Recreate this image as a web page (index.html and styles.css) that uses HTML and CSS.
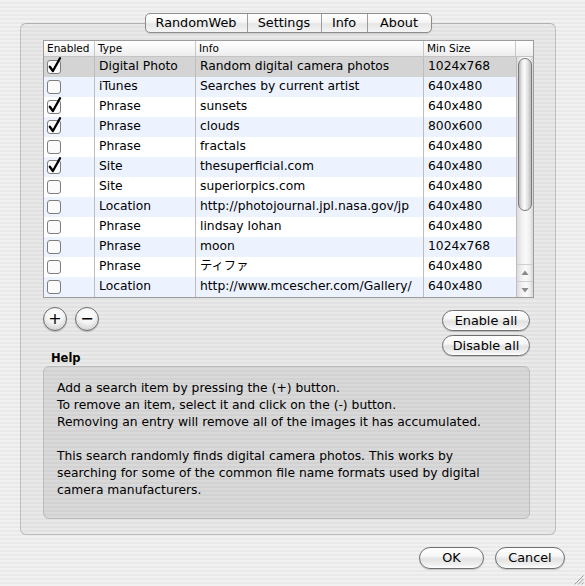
FILE: index.html
```html
<!DOCTYPE html>
<html>
<head>
<meta charset="utf-8">
<link rel="stylesheet" href="styles.css">
</head>
<body>
<div class="window">
  <div class="tabs-wrap">
    <div class="tabs">
      <div class="tab t1">RandomWeb</div>
      <div class="tab t2">Settings</div>
      <div class="tab t3">Info</div>
      <div class="tab t4">About</div>
    </div>
  </div>
  <div class="group">
    <div class="table">
      <div class="thead">
        <div class="th c1">Enabled</div>
        <div class="th c2">Type</div>
        <div class="th c3">Info</div>
        <div class="th c4">Min Size</div>
        <div class="th c5"></div>
      </div>
      <div class="tbody">
        <div class="rows">
          <div class="row sel"><div class="td c1"><svg class="cb" viewBox="0 0 17 17"><rect x="1.5" y="3.5" width="13" height="13" rx="2.5" class="box"/><path d="M3.8 9.8 L6.9 14 L14 1.2" class="chk"/></svg></div><div class="td c2">Digital Photo</div><div class="td c3">Random digital camera photos</div><div class="td c4">1024x768</div></div>
          <div class="row alt"><div class="td c1"><svg class="cb" viewBox="0 0 17 17"><rect x="1.5" y="3.5" width="13" height="13" rx="2.5" class="box"/></svg></div><div class="td c2">iTunes</div><div class="td c3">Searches by current artist</div><div class="td c4">640x480</div></div>
          <div class="row"><div class="td c1"><svg class="cb" viewBox="0 0 17 17"><rect x="1.5" y="3.5" width="13" height="13" rx="2.5" class="box"/><path d="M3.8 9.8 L6.9 14 L14 1.2" class="chk"/></svg></div><div class="td c2">Phrase</div><div class="td c3">sunsets</div><div class="td c4">640x480</div></div>
          <div class="row alt"><div class="td c1"><svg class="cb" viewBox="0 0 17 17"><rect x="1.5" y="3.5" width="13" height="13" rx="2.5" class="box"/><path d="M3.8 9.8 L6.9 14 L14 1.2" class="chk"/></svg></div><div class="td c2">Phrase</div><div class="td c3">clouds</div><div class="td c4">800x600</div></div>
          <div class="row"><div class="td c1"><svg class="cb" viewBox="0 0 17 17"><rect x="1.5" y="3.5" width="13" height="13" rx="2.5" class="box"/></svg></div><div class="td c2">Phrase</div><div class="td c3">fractals</div><div class="td c4">640x480</div></div>
          <div class="row alt"><div class="td c1"><svg class="cb" viewBox="0 0 17 17"><rect x="1.5" y="3.5" width="13" height="13" rx="2.5" class="box"/><path d="M3.8 9.8 L6.9 14 L14 1.2" class="chk"/></svg></div><div class="td c2">Site</div><div class="td c3">thesuperficial.com</div><div class="td c4">640x480</div></div>
          <div class="row"><div class="td c1"><svg class="cb" viewBox="0 0 17 17"><rect x="1.5" y="3.5" width="13" height="13" rx="2.5" class="box"/></svg></div><div class="td c2">Site</div><div class="td c3">superiorpics.com</div><div class="td c4">640x480</div></div>
          <div class="row alt"><div class="td c1"><svg class="cb" viewBox="0 0 17 17"><rect x="1.5" y="3.5" width="13" height="13" rx="2.5" class="box"/></svg></div><div class="td c2">Location</div><div class="td c3">http://photojournal.jpl.nasa.gov/jp</div><div class="td c4">640x480</div></div>
          <div class="row"><div class="td c1"><svg class="cb" viewBox="0 0 17 17"><rect x="1.5" y="3.5" width="13" height="13" rx="2.5" class="box"/></svg></div><div class="td c2">Phrase</div><div class="td c3">lindsay lohan</div><div class="td c4">640x480</div></div>
          <div class="row alt"><div class="td c1"><svg class="cb" viewBox="0 0 17 17"><rect x="1.5" y="3.5" width="13" height="13" rx="2.5" class="box"/></svg></div><div class="td c2">Phrase</div><div class="td c3">moon</div><div class="td c4">1024x768</div></div>
          <div class="row"><div class="td c1"><svg class="cb" viewBox="0 0 17 17"><rect x="1.5" y="3.5" width="13" height="13" rx="2.5" class="box"/></svg></div><div class="td c2">Phrase</div><div class="td c3">ティファ</div><div class="td c4">640x480</div></div>
          <div class="row alt"><div class="td c1"><svg class="cb" viewBox="0 0 17 17"><rect x="1.5" y="3.5" width="13" height="13" rx="2.5" class="box"/></svg></div><div class="td c2">Location</div><div class="td c3">http://www.mcescher.com/Gallery/</div><div class="td c4">640x480</div></div>
        </div>
        <div class="scrollbar">
          <div class="thumb"></div>
          <div class="track-space"></div>
          <div class="arrow"><svg viewBox="0 0 16 16" width="16" height="16"><path d="M4.5 10 L8 5.5 L11.5 10 Z" class="arr"/></svg></div>
          <div class="arrow down"><svg viewBox="0 0 16 16" width="16" height="16"><path d="M4.5 6 L8 10.5 L11.5 6 Z" class="arr"/></svg></div>
        </div>
      </div>
    </div>
    <div class="controls">
      <div class="left-col">
        <div class="pm">
          <div class="circle">+</div>
          <div class="circle">−</div>
        </div>
        <div class="help-label">Help</div>
      </div>
      <div class="right-col">
        <div class="pill wide">Enable all</div>
        <div class="pill wide">Disable all</div>
      </div>
    </div>
    <div class="help-box">
      <p>Add a search item by pressing the (+) button.<br>To remove an item, select it and click on the (-) button.<br>Removing an entry will remove all of the images it has accumulated.</p>
      <p>This search randomly finds digital camera photos. This works by<br>searching for some of the common file name formats used by digital<br>camera manufacturers.</p>
    </div>
  </div>
  <div class="footer">
    <div class="pill ok">OK</div>
    <div class="pill cancel">Cancel</div>
  </div>
  <svg class="grip" viewBox="0 0 12 12" width="12" height="12"><path d="M11.5 2.5 L2.5 11.5 M11.5 6 L6 11.5 M11.5 9.5 L9.5 11.5" /></svg>
</div>
</body>
</html>
```

FILE: styles.css
```css
* { box-sizing: border-box; }
html, body { margin: 0; padding: 0; }
body {
  font-family: "DejaVu Sans", "Noto Sans CJK JP", sans-serif;
  color: #000;
  background: #ececec;
}
.window {
  position: relative;
  width: 585px;
  height: 586px;
  overflow: hidden;
  padding-top: 13px;
  background: repeating-linear-gradient(to bottom, #f1f1f1 0, #f1f1f1 2px, #e9e9e9 2px, #e9e9e9 4px);
}
.tabs-wrap {
  width: 536px;
  margin-left: 20px;
  margin-bottom: -10px;
  display: flex;
  justify-content: center;
  position: relative;
  z-index: 2;
}
.tabs {
  display: flex;
  height: 20px;
  border: 1px solid #8c8c8c;
  border-radius: 5px;
  overflow: hidden;
  background: linear-gradient(to bottom, #ffffff 0%, #f6f6f6 45%, #e6e6e6 55%, #f4f4f4 100%);
  box-shadow: 0 1px 1px rgba(0,0,0,0.12);
}
.tab {
  font-size: 12.8px;
  line-height: 18px;
  text-align: center;
  border-right: 1px solid #9c9c9c;
}
.tab:last-child { border-right: none; }
.t1 { width: 102px; }
.t2 { width: 74px; }
.t3 { width: 46px; }
.t4 { width: 63px; }

.group {
  margin-left: 20px;
  width: 536px;
  height: 512px;
  border: 1px solid #bdbdbd;
  border-top-color: #b0b0b0;
  border-radius: 6px;
  background: rgba(0,0,0,0.03);
  padding: 16px 21px 0 22px;
}
.table {
  width: 491px;
  height: 258px;
  border: 1px solid #9c9c9c;
  background: #fff;
  display: flex;
  flex-direction: column;
}
.thead {
  display: flex;
  height: 16px;
  flex: none;
  border-bottom: 1px solid #c4c4c4;
  background: linear-gradient(to bottom, #ffffff 0%, #f7f7f7 50%, #ececec 100%);
}
.th {
  font-size: 10.5px;
  line-height: 15px;
  padding-left: 3px;
  border-right: 1px solid #c8c8c8;
  white-space: nowrap;
  overflow: hidden;
}
.th.c5 { border-right: none; }
.c1 { width: 51px; }
.c2 { width: 101px; }
.c3 { width: 228px; }
.c4 { width: 92px; }
.c5 { width: 17px; }
.tbody { display: flex; flex: 1; }
.rows { width: 472px; }
.row {
  display: flex;
  height: 20px;
  background: #fff;
}
.row.alt { background: #edf3fe; }
.row.sel { background: #d4d4d4; }
.td {
  font-size: 12.3px;
  line-height: 19px;
  padding-left: 4px;
  white-space: nowrap;
  overflow: hidden;
  border-right: 1px solid #bdbdbd;
}
.td.c4 { border-right: none; padding-left: 4px; }
.td.c1 { padding-left: 2px; }
.cb { width: 17px; height: 17px; margin-top: 0; display: block; }
.cb .box { fill: #fbfbfb; stroke: #7c7c7c; stroke-width: 1; }
.cb .chk { fill: none; stroke: #000; stroke-width: 2.3; stroke-linecap: round; stroke-linejoin: round; }

.scrollbar {
  width: 17px;
  display: flex;
  flex-direction: column;
  border-left: 1px solid #bdbdbd;
  background: linear-gradient(to right, #dcdcdc 0%, #f0f0f0 30%, #fafafa 55%, #eeeeee 80%, #d6d6d6 100%);
}
.thumb {
  height: 153px;
  margin: 1px 1px 0 1px;
  border: 1px solid #7a7a7a;
  border-radius: 7px;
  background: linear-gradient(to right, #b8b8b8 0%, #e8e8e8 25%, #fcfcfc 45%, #e4e4e4 70%, #bcbcbc 100%);
}
.track-space { flex: 1; }
.arrow {
  height: 17px;
  display: flex;
  justify-content: center;
  align-items: center;
  border-top: 1px solid #cfcfcf;
}
.arrow.down { height: 16px; }
.arrow svg { display: block; }
.arr { fill: #8a8a8a; }

.controls {
  display: flex;
  justify-content: space-between;
  width: 491px;
  padding-right: 4px;
}
.left-col { display: flex; flex-direction: column; }
.pm { display: flex; gap: 8px; margin-top: 9px; }
.circle {
  width: 24px;
  height: 24px;
  border-radius: 50%;
  border: 1px solid #6c6c6c;
  background: radial-gradient(circle at 50% 30%, #ffffff 0%, #f4f4f4 45%, #d4d4d4 80%, #eaeaea 100%);
  box-shadow: 0 1px 1px rgba(0,0,0,0.2);
  font-size: 16px;
  line-height: 21px;
  text-align: center;
}
.help-label {
  font-size: 11.5px;
  font-weight: bold;
  line-height: 14px;
  margin-top: 20px;
  margin-left: 8px;
}
.right-col { display: flex; flex-direction: column; gap: 4px; margin-top: 12px; }
.pill {
  height: 21px;
  border: 1px solid #6f6f6f;
  border-radius: 11px;
  background: linear-gradient(to bottom, #ffffff 0%, #f7f7f7 40%, #e2e2e2 55%, #f0f0f0 85%, #ffffff 100%);
  box-shadow: 0 1px 1px rgba(0,0,0,0.18);
  font-size: 12.8px;
  line-height: 19px;
  text-align: center;
}
.pill.wide { width: 88px; }
.help-box {
  margin-top: 1px;
  width: 487px;
  height: 153px;
  border: 1px solid #bcbcbc;
  border-radius: 6px;
  background: rgba(0,0,0,0.065);
  padding: 13px 0 0 13px;
}
.help-box p {
  margin: 0 0 17px 0;
  font-size: 12.3px;
  line-height: 17px;
  white-space: nowrap;
}
.footer {
  display: flex;
  justify-content: flex-end;
  gap: 11px;
  padding-right: 20px;
  margin-top: 12px;
}
.pill.ok { width: 65px; height: 22px; line-height: 20px; }
.pill.cancel { width: 70px; height: 22px; line-height: 20px; }
.grip {
  position: absolute;
  right: 1px;
  bottom: 1px;
}
.grip path { stroke: #9a9a9a; stroke-width: 1; fill: none; }
```
